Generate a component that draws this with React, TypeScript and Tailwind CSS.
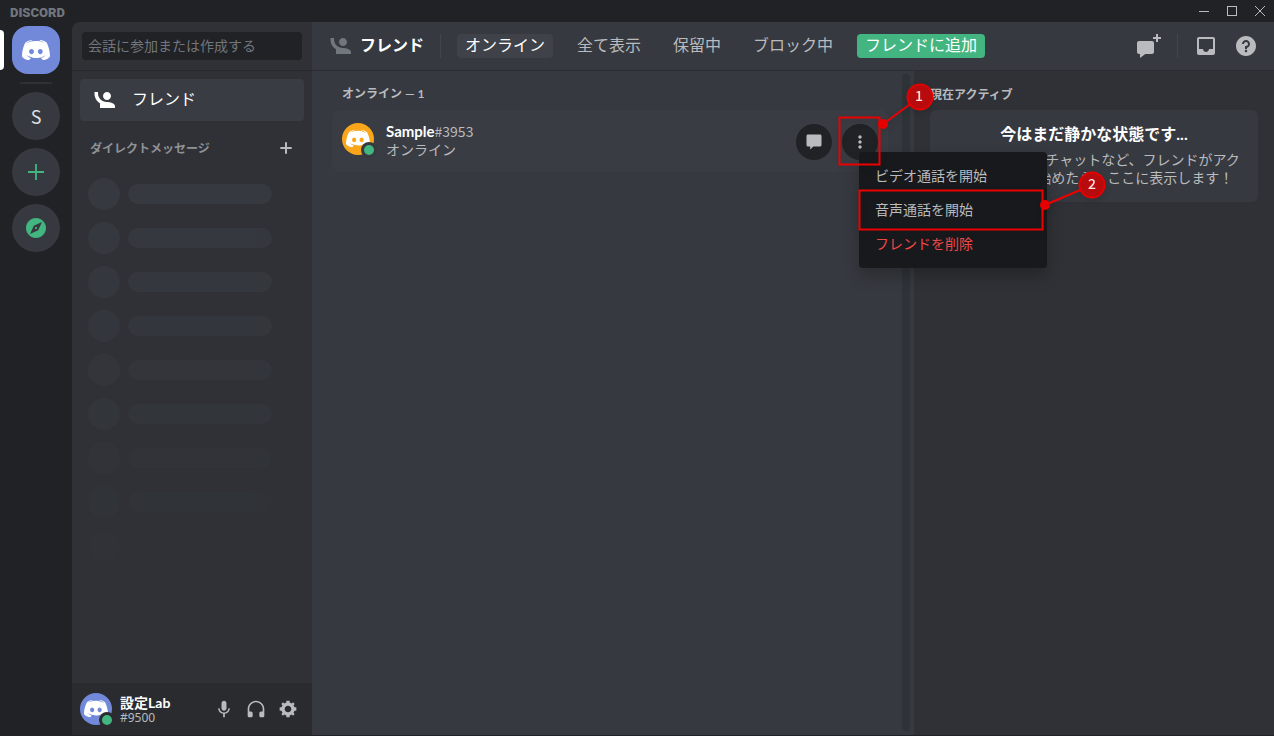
import React from 'react';

interface IconProps {
  d: string;
  size?: number;
  className?: string;
}

const Icon: React.FC<IconProps> = ({ d, size = 24, className }) => (
  <svg width={size} height={size} viewBox="0 0 24 24" className={className} aria-hidden="true">
    <path fill="currentColor" fillRule="evenodd" clipRule="evenodd" d={d} />
  </svg>
);

const ICONS = {
  friends:
    'M2.5 4V5.5C2.5 9.65 4.71 13.28 8 15.3V20H23V18C23 15.34 17.67 14 15 14H14.75C10 14 6 10 6 5.5V4H2.5ZM15 4C12.79 4 11 5.79 11 8C11 10.21 12.79 12 15 12C17.21 12 19 10.21 19 8C19 5.79 17.21 4 15 4Z',
  chat: 'M4.8 3C3.8 3 3 3.8 3 4.8V15.6C3 16.6 3.8 17.4 4.8 17.4H7.5V21L11.1 17.4H19.2C20.2 17.4 21 16.6 21 15.6V4.8C21 3.8 20.2 3 19.2 3H4.8Z',
  newChat:
    'M21 0V3H24V5H21V8H19V5H16V3H19V0H21ZM3 20V24L8.3 20H15C16.1 20 17 19.1 17 18V9C17 7.9 16.1 7 15 7H2C0.9 7 0 7.9 0 9V18C0 19.1 0.9 20 2 20H3Z',
  inbox:
    'M19 3H4.99C3.88 3 3.01 3.89 3.01 5L3 19C3 20.1 3.88 21 4.99 21H19C20.1 21 21 20.1 21 19V5C21 3.89 20.1 3 19 3ZM19 15H15C15 16.66 13.65 18 12 18C10.35 18 9 16.66 9 15H4.99V5H19V15Z',
  help: 'M12 2C6.486 2 2 6.487 2 12C2 17.515 6.486 22 12 22C17.514 22 22 17.515 22 12C22 6.487 17.514 2 12 2ZM12 18.25C11.31 18.25 10.75 17.691 10.75 17C10.75 16.31 11.31 15.75 12 15.75C12.69 15.75 13.25 16.31 13.25 17C13.25 17.691 12.69 18.25 12 18.25ZM13 13.875V15H11V12H12C13.104 12 14 11.103 14 10C14 8.896 13.104 8 12 8C10.896 8 10 8.896 10 10H8C8 7.795 9.795 6 12 6C14.205 6 16 7.795 16 10C16 11.861 14.723 13.429 13 13.875Z',
  mic: 'M14.99 11C14.99 12.66 13.66 14 12 14C10.34 14 9 12.66 9 11V5C9 3.34 10.34 2 12 2C13.66 2 15 3.34 15 5L14.99 11ZM12 16.1C14.76 16.1 17.3 14 17.3 11H19C19 14.42 16.28 17.24 13 17.72V22H11V17.72C7.72 17.23 5 14.41 5 11H6.7C6.7 14 9.24 16.1 12 16.1Z',
  headphones:
    'M12 2C6.486 2 2 6.485 2 12V20C2 21.104 2.895 22 4 22H6C7.104 22 8 21.104 8 20V17C8 15.896 7.104 15 6 15H4V12C4 7.588 7.589 4 12 4C16.411 4 20 7.588 20 12V15H18C16.896 15 16 15.896 16 17V20C16 21.104 16.896 22 18 22H20C21.104 22 22 21.104 22 20V12C22 6.485 17.514 2 12 2Z',
  gear: 'M19.738 10H22V14H19.739C19.498 14.931 19.1 15.798 18.565 16.564L20 18L18 20L16.565 18.564C15.797 19.099 14.932 19.498 14 19.738V22H10V19.738C9.069 19.498 8.203 19.099 7.436 18.564L6 20L4 18L5.436 16.564C4.901 15.799 4.502 14.932 4.262 14H2V10H4.262C4.502 9.068 4.9 8.202 5.436 7.436L4 6L6 4L7.436 5.436C8.202 4.9 9.068 4.502 10 4.262V2H14V4.261C14.932 4.502 15.797 4.9 16.565 5.435L18 4L20 6L18.564 7.436C19.099 8.202 19.498 9.069 19.738 10ZM12 16C14.2091 16 16 14.2091 16 12C16 9.79086 14.2091 8 12 8C9.79086 8 8 9.79086 8 12C8 14.2091 9.79086 16 12 16Z',
  compass:
    'M12 10.9C11.39 10.9 10.9 11.39 10.9 12C10.9 12.61 11.39 13.1 12 13.1C12.61 13.1 13.1 12.61 13.1 12C13.1 11.39 12.61 10.9 12 10.9ZM12 2C6.48 2 2 6.48 2 12C2 17.52 6.48 22 12 22C17.52 22 22 17.52 22 12C22 6.48 17.52 2 12 2ZM14.19 14.19L6 18L9.81 9.81L18 6L14.19 14.19Z',
  plus: 'M20 11.1H12.9V4H11.1V11.1H4V12.9H11.1V20H12.9V12.9H20V11.1Z',
  plusBold: 'M20.5 10.5H13.5V3.5H10.5V10.5H3.5V13.5H10.5V20.5H13.5V13.5H20.5V10.5Z',
  more: 'M12 8C13.1 8 14 7.1 14 6C14 4.9 13.1 4 12 4C10.9 4 10 4.9 10 6C10 7.1 10.9 8 12 8ZM12 14C13.1 14 14 13.1 14 12C14 10.9 13.1 10 12 10C10.9 10 10 10.9 10 12C10 13.1 10.9 14 12 14ZM12 20C13.1 20 14 19.1 14 18C14 16.9 13.1 16 12 16C10.9 16 10 16.9 10 18C10 19.1 10.9 20 12 20Z',
};

const Logo: React.FC<{ className?: string }> = ({ className }) => (
  <svg viewBox="0 0 28 20" className={className} aria-hidden="true">
    <path
      fill="#fff"
      fillRule="evenodd"
      d="M20.6644 20C20.6644 20 19.8014 18.9762 19.0822 18.0714C22.2226 17.1905 23.4212 15.2381 23.4212 15.2381C22.4384 15.881 21.5034 16.3334 20.6644 16.6429C19.4658 17.1429 18.3151 17.4762 17.1884 17.6667C14.887 18.0953 12.7774 17.9762 10.9795 17.6429C9.613 17.381 8.4384 17 7.4555 16.6191C6.9041 16.4048 6.3048 16.1429 5.7055 15.8096C5.6336 15.7619 5.5616 15.7381 5.4897 15.6905C5.4418 15.6667 5.4178 15.6429 5.3938 15.6191C4.9623 15.381 4.7226 15.2143 4.7226 15.2143C4.7226 15.2143 5.8733 17.1191 8.9178 18.0238C8.1986 18.9286 7.3116 20 7.3116 20C2.0137 19.8334 0 16.3809 0 16.3809C0 8.7144 3.4521 2.5002 3.4521 2.5002C6.9041 -0.0712 10.1884 0.0002 10.1884 0.0002L10.4281 0.2859C6.113 1.524 4.1233 3.4049 4.1233 3.4049C4.1233 3.4049 4.6507 3.1192 5.5377 2.7144C8.1027 1.5953 10.1404 1.2858 10.9795 1.2143C11.1233 1.1905 11.2431 1.1667 11.387 1.1667C12.8493 0.9762 14.5034 0.9286 16.2294 1.1191C18.5068 1.381 20.9521 2.0478 23.4452 3.4049C23.4452 3.4049 21.5514 1.6191 17.476 0.381L17.8116 0.0002C17.8116 0.0002 21.0959 -0.0712 24.5479 2.5002C24.5479 2.5002 28 8.7144 28 16.3809C28 16.3809 25.9623 19.8334 20.6644 20ZM9.5171 8.881C8.1507 8.881 7.0719 10.0715 7.0719 11.5239C7.0719 12.9763 8.1747 14.1667 9.5171 14.1667C10.8836 14.1667 11.9623 12.9763 11.9623 11.5239C11.9863 10.0715 10.8836 8.881 9.5171 8.881ZM18.2671 8.881C16.9007 8.881 15.8219 10.0715 15.8219 11.5239C15.8219 12.9763 16.9247 14.1667 18.2671 14.1667C19.6336 14.1667 20.7123 12.9763 20.7123 11.5239C20.7123 10.0715 19.6336 8.881 18.2671 8.881Z"
    />
  </svg>
);

interface AvatarProps {
  color: string;
  ring: string;
}

const Avatar: React.FC<AvatarProps> = ({ color, ring }) => (
  <div className={`relative flex size-8 shrink-0 items-center justify-center rounded-full ${color}`}>
    <Logo className="w-6" />
    <span className={`absolute -right-[3px] -bottom-[3px] size-4 rounded-full border-3 bg-[#43b581] ${ring}`} />
  </div>
);

const TitleBar: React.FC = () => (
  <div className="flex h-[22px] shrink-0 items-center justify-between pl-2.5 text-[#b9bbbe]">
    <span className="pt-0.5 font-[Roboto] text-[13px] leading-none font-black text-[#72767d]">DISCORD</span>
    <div className="flex">
      <button type="button" aria-label="最小化" className="flex h-[22px] w-7 items-center justify-center">
        <svg width="10" height="10" viewBox="0 0 10 10"><path stroke="currentColor" d="M0 5.5H10" /></svg>
      </button>
      <button type="button" aria-label="最大化" className="flex h-[22px] w-7 items-center justify-center">
        <svg width="10" height="10" viewBox="0 0 10 10"><rect x="0.5" y="0.5" width="9" height="9" fill="none" stroke="currentColor" /></svg>
      </button>
      <button type="button" aria-label="閉じる" className="flex h-[22px] w-7 items-center justify-center">
        <svg width="10" height="10" viewBox="0 0 10 10"><path stroke="currentColor" d="M0 0L10 10M10 0L0 10" /></svg>
      </button>
    </div>
  </div>
);

const ServerRail: React.FC = () => (
  <nav className="flex w-[72px] shrink-0 flex-col items-center gap-2 pt-1">
    <div className="relative flex w-full justify-center">
      <span className="absolute top-1 left-0 h-10 w-1 rounded-r bg-white" />
      <button type="button" aria-label="ホーム" className="flex size-12 items-center justify-center rounded-2xl bg-[#7289da]">
        <Logo className="w-7" />
      </button>
    </div>
    <div className="h-0.5 w-8 rounded-xs bg-[#2f3136]" />
    <button type="button" className="size-12 rounded-full bg-[#36393f] text-lg text-[#dcddde]">S</button>
    <button type="button" aria-label="サーバーを追加" className="flex size-12 items-center justify-center rounded-full bg-[#36393f] text-[#43b581]">
      <Icon d={ICONS.plus} />
    </button>
    <button type="button" aria-label="サーバーを探す" className="flex size-12 items-center justify-center rounded-full bg-[#36393f] text-[#43b581]">
      <Icon d={ICONS.compass} />
    </button>
  </nav>
);

// the placeholder rows fade out towards the bottom of the list
const PLACEHOLDERS = [
  { opacity: 'opacity-100', bar: true },
  { opacity: 'opacity-90', bar: true },
  { opacity: 'opacity-80', bar: true },
  { opacity: 'opacity-70', bar: true },
  { opacity: 'opacity-60', bar: true },
  { opacity: 'opacity-50', bar: true },
  { opacity: 'opacity-30', bar: true },
  { opacity: 'opacity-25', bar: true },
  { opacity: 'opacity-20', bar: false },
];

const Sidebar: React.FC = () => (
  <aside className="flex w-60 shrink-0 flex-col rounded-tl-lg bg-[#2f3136]">
    <div className="flex h-12 items-center px-2.5 shadow-[0_1px_0_#27292d]">
      <input
        type="text"
        aria-label="会話に参加または作成する"
        placeholder="会話に参加または作成する"
        className="h-7 w-full rounded bg-[#202225] px-1.5 pb-0.5 text-sm text-[#dcddde] placeholder:text-[#72767d]"
      />
    </div>
    <div className="flex flex-1 flex-col px-2 pt-[9px]">
      <button type="button" className="flex h-[42px] items-center gap-4 rounded bg-[#393c43] px-3 text-base text-white">
        <Icon d={ICONS.friends} />
        <span className="pb-1">フレンド</span>
      </button>
      <div className="mt-[19px] flex h-4 items-center justify-between px-2.5 text-xs font-bold text-[#8e9297]">
        <h2>ダイレクトメッセージ</h2>
        <button type="button" aria-label="DMを作成" className="text-[#b9bbbe]">
          <Icon d={ICONS.plusBold} size={16} />
        </button>
      </div>
      <div className="mt-[22px] flex flex-col gap-3 px-2">
        {PLACEHOLDERS.map((row, i) => (
          <div key={i} className={`flex items-center gap-2 ${row.opacity}`}>
            <div className="size-8 rounded-full bg-[#36393f]" />
            {row.bar && <div className="h-5 w-36 rounded-full bg-[#36393f]" />}
          </div>
        ))}
      </div>
    </div>
    <div className="flex h-[52px] items-center bg-[#292b2f] px-2">
      <Avatar color="bg-[#7289da]" ring="border-[#292b2f]" />
      <div className="ml-2 flex-1 pt-0.5">
        <div className="font-['Lato','Noto_Sans_CJK_JP',sans-serif] text-sm leading-4 font-bold text-white">設定Lab</div>
        <div className="font-['Noto_Sans',sans-serif] text-xs leading-[14px] text-[#b9bbbe]">#9500</div>
      </div>
      <div className="flex text-[#b9bbbe]">
        <button type="button" aria-label="ミュート" className="flex size-8 items-center justify-center">
          <Icon d={ICONS.mic} size={20} />
        </button>
        <button type="button" aria-label="スピーカーミュート" className="flex size-8 items-center justify-center">
          <Icon d={ICONS.headphones} size={20} />
        </button>
        <button type="button" aria-label="ユーザー設定" className="flex size-8 items-center justify-center">
          <Icon d={ICONS.gear} size={20} />
        </button>
      </div>
    </div>
  </aside>
);

const TABS = ['オンライン', '全て表示', '保留中', 'ブロック中'];

const Header: React.FC = () => (
  <header className="relative z-20 flex h-12 shrink-0 items-center px-4 text-base text-[#b9bbbe] shadow-[0_1px_0_#2b2d32]">
    <Icon d={ICONS.friends} className="text-[#72767d]" />
    <h1 className="ml-2 pb-1 font-bold text-white">フレンド</h1>
    <div className="mx-4 h-6 w-px bg-[#42454b]" />
    <div className="flex gap-4 whitespace-nowrap">
      {TABS.map((tab, i) => (
        <button key={tab} type="button" className={`h-6 rounded px-2 pb-1 leading-5 ${i === 0 ? 'bg-[#3f4248] text-white' : ''}`}>
          {tab}
        </button>
      ))}
      <button type="button" className="h-6 rounded bg-[#43b581] px-2 pb-1 leading-5 text-white">フレンドに追加</button>
    </div>
    <div className="ml-auto flex items-center gap-4">
      <button type="button" aria-label="新規グループDM"><Icon d={ICONS.newChat} /></button>
      <div className="h-6 w-px bg-[#42454b]" />
      <button type="button" aria-label="受信ボックス"><Icon d={ICONS.inbox} /></button>
      <button type="button" aria-label="ヘルプ"><Icon d={ICONS.help} /></button>
    </div>
  </header>
);

const MENU = [
  { label: 'ビデオ通話を開始', color: 'text-[#b9bbbe]' },
  { label: '音声通話を開始', color: 'text-[#b9bbbe]' },
  { label: 'フレンドを削除', color: 'text-[#f04747]' },
];

// numbered callouts, drawn from a corner up and left of the button
const Callouts: React.FC = () => (
  <svg width="280" height="160" viewBox="0 0 280 160" className="pointer-events-none absolute -top-11 -left-1 max-w-none drop-shadow-md">
    <g stroke="#ec0000" strokeWidth="2" fill="none">
      <rect x="1.5" y="37.5" width="40" height="47" />
      <path d="M45 44L82 17" />
      <rect x="21.5" y="110.5" width="183" height="39" />
      <path d="M207 125L254 105" />
    </g>
    <circle cx="45" cy="44" r="5" fill="#e60000" />
    <circle cx="207" cy="125" r="5" fill="#e60000" />
    <g fill="#b80b0e" stroke="#e60000" strokeWidth="2">
      <circle cx="82" cy="17" r="12.5" />
      <circle cx="254" cy="105" r="12.5" />
    </g>
    <g fill="#ffe3e3" fontSize="14" fontWeight="500" textAnchor="middle">
      <text x="81" y="21">1</text>
      <text x="254" y="109">2</text>
    </g>
  </svg>
);

const FriendRow: React.FC = () => (
  <div className="flex h-[62px] rounded-lg bg-[#393c43] px-2.5 pt-[13px]">
    <Avatar color="bg-[#faa61a]" ring="border-[#36393f]" />
    <div className="-mt-px ml-3 flex-1">
      <div className="flex items-center leading-[18px]">
        <span className="font-['Lato',sans-serif] text-[15px] leading-[18px] font-bold text-white">Sample</span>
        <span className="text-sm leading-[18px] text-[#b9bbbe]">#3953</span>
      </div>
      <div className="text-sm leading-[18px] text-[#b9bbbe]">オンライン</div>
    </div>
    <div className="mt-px flex gap-2.5 text-[#b9bbbe]">
      <button type="button" aria-label="メッセージ" className="flex size-9 items-center justify-center rounded-full bg-[#202225]">
        <Icon d={ICONS.chat} size={20} />
      </button>
      <div className="relative">
        <button type="button" aria-label="その他" className="flex size-9 items-center justify-center rounded-full bg-[#202225]">
          <Icon d={ICONS.more} size={20} />
        </button>
        <div role="menu" className="absolute top-7 left-[17px] flex w-[188px] flex-col rounded bg-[#18191c] pt-1.5 pb-2 shadow-[0_8px_16px_rgba(0,0,0,0.24)]">
          {MENU.map((item) => (
            <button key={item.label} type="button" role="menuitem" className={`h-[34px] px-4 text-left text-sm ${item.color}`}>
              {item.label}
            </button>
          ))}
        </div>
        <Callouts />
      </div>
    </div>
  </div>
);

const ActiveNow: React.FC = () => (
  <aside className="w-[360px] shrink-0 bg-[#2f3136] px-4 pt-[15px]">
    <h2 className="text-xs leading-[18px] font-bold text-[#b9bbbe]">現在アクティブ</h2>
    <div className="mt-[7px] rounded-md bg-[#36393f] px-4 py-3.5 text-center">
      <h3 className="font-['Lato','Noto_Sans_CJK_JP',sans-serif] text-base leading-5 font-bold text-white">今はまだ静かな状態です...</h3>
      <p className="mt-1.5 pb-0.5 text-sm leading-[18px] text-[#b9bbbe]">
        ゲームやボイスチャットなど、フレンドがアクティビティを始めたら、ここに表示します！
      </p>
    </div>
  </aside>
);

export default function App() {
  return (
    <div className="flex h-screen flex-col bg-[#202225] pb-px font-['Noto_Sans_CJK_JP','Noto_Sans',sans-serif]">
      <TitleBar />
      <div className="flex min-h-0 flex-1">
        <ServerRail />
        <Sidebar />
        <div className="flex min-w-0 flex-1 flex-col bg-[#36393f]">
          <Header />
          <div className="flex min-h-0 flex-1">
            <main className="relative z-10 flex min-w-0 flex-1 pr-1 pl-5">
              <div className="min-w-0 flex-1 pt-[15px] pr-3.5">
                <h2 className="mb-[7px] pl-2.5 font-['Lato','Noto_Sans_CJK_JP',sans-serif] text-xs leading-[18px] font-bold text-[#b9bbbe]">オンライン — 1</h2>
                <FriendRow />
              </div>
              <div className="my-1 w-2 rounded-full bg-[#2e3338]" />
            </main>
            <ActiveNow />
          </div>
        </div>
      </div>
    </div>
  );
}
